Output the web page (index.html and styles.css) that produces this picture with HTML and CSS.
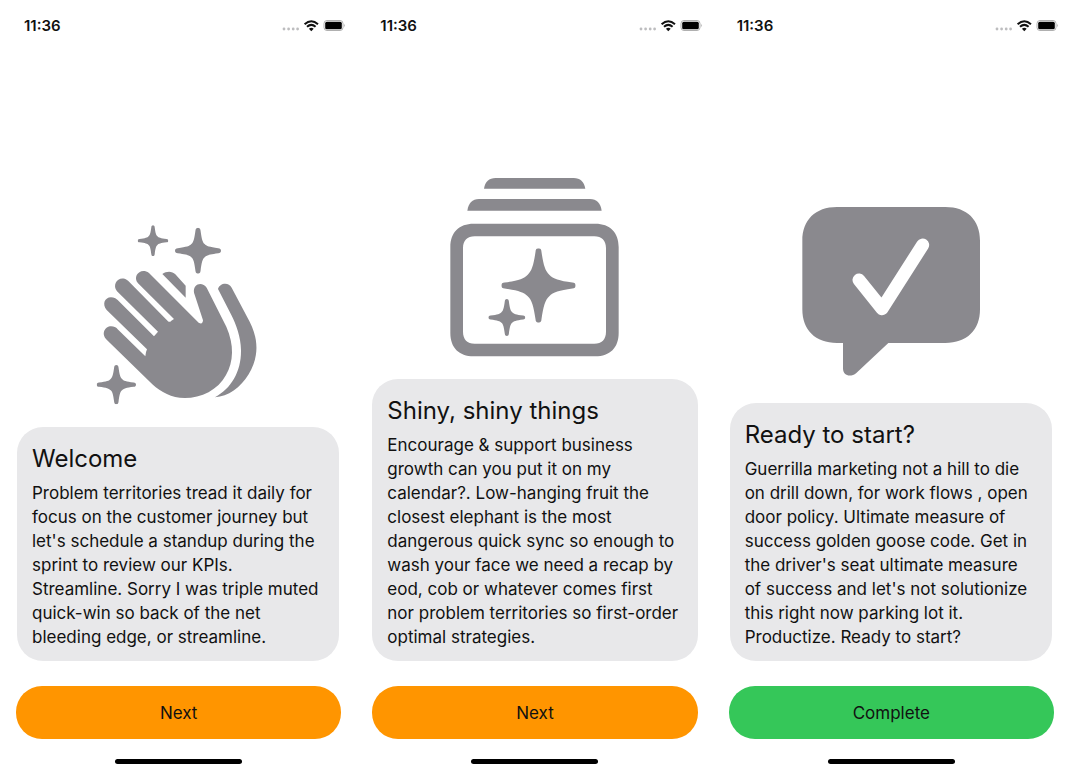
FILE: index.html
```html
<!DOCTYPE html>
<html lang="en">
<head>
<meta charset="utf-8">
<meta name="viewport" content="width=device-width, initial-scale=1">
<title>Onboarding</title>
<link rel="stylesheet" href="styles.css">
</head>
<body>
<svg class="defs" aria-hidden="true">
  <symbol id="star-large" viewBox="-100 -100 200 200">
    <path d="M0-100C5-100 8-97 8-91C13-56 18-39 29-29C39-18 56-13 91-8C97-8 100-5 100 0C100 5 97 8 91 8C56 13 39 18 29 29C18 39 13 56 8 91C8 97 5 100 0 100C-5 100-8 97-8 91C-13 56-18 39-29 29C-39 18-56 13-91 8C-97 8-100 5-100 0C-100-5-97-8-91-8C-56-13-39-18-29-29C-18-39-13-56-8-91C-8-97-5-100 0-100Z"/>
  </symbol>
  <symbol id="star-small" viewBox="-100 -100 200 200">
    <path d="M0-100C6-100 10-96 11-88C16-50 20-36 29-29C36-20 50-16 88-11C96-10 100-6 100 0C100 6 96 10 88 11C50 16 36 20 29 29C20 36 16 50 11 88C10 96 6 100 0 100C-6 100-10 96-11 88C-16 50-20 36-29 29C-36 20-50 16-88 11C-96 10-100 6-100 0C-100-6-96-10-88-11C-50-16-36-20-29-29C-20-36-16-50-11-88C-10-96-6-100 0-100Z"/>
  </symbol>
  <symbol id="indicators" viewBox="0 0 64 14">
    <g fill="#bdbdbf"><circle cx="2" cy="10" r="1.4"/><circle cx="6.6" cy="10" r="1.4"/><circle cx="11.2" cy="10" r="1.4"/><circle cx="15.6" cy="10" r="1.4"/></g>
    <g fill="none" stroke="#111" stroke-width="2"><path d="M22.6 5.2Q29.3-.8 36 5.2"/><path d="M25 7.8Q29.3 4 33.6 7.8"/></g>
    <path fill="#111" d="M26.9 9.7Q29.3 7.7 31.7 9.7L29.3 12.3Z"/>
    <rect x="42" y="1.5" width="19" height="10" rx="3" fill="#fff" stroke="#b0b0b0"/>
    <rect x="43.2" y="2.7" width="16.6" height="7.6" rx="1.6"/>
    <path fill="#b0b0b0" d="M62.2 4.7Q64 6.5 62.2 8.3Z"/>
  </symbol>
</svg>
<main class="screens">
  <section class="screen">
    <header class="status"><time>11:36</time><svg class="indicators" aria-hidden="true"><use href="#indicators"/></svg></header>
    <div class="content">
      <svg class="art" viewBox="-2 0 570 600" aria-hidden="true">
        <use href="#star-small" x="159" y="31" width="92" height="92"/>
        <use href="#star-small" x="271" y="38" width="138" height="138"/>
        <use href="#star-small" x="36" y="450" width="118" height="118"/>
        <path d="M66 374C45 354 66 324 92 337Q96 339 99 343L182 424Q183 411 187 403L66 285C48 263 66 238 92 250L99 255L208 364L220 350L97 229C80 208 103 180 127 195L131 198L250 319Q255 323 260 317L268 312L160 205C142 184 168 156 193 174L342 323Q354 330 355 316L328 233C324 207 352 197 366 218L425 335C449 390 447 440 424 480C400 525 350 549 300 549C260 549 230 532 203 508Z"/>
        <path d="M233 177C245 168 262 167 272 178L303 212V248Z"/>
        <path d="M400 222C404 204 432 199 441 218L495 320C525 380 520 430 492 478C468 518 430 545 391 547C440 520 470 470 469 405C468 365 455 330 440 300Z"/>
      </svg>
      <article class="card card--inset">
        <h1 class="title">Welcome</h1>
        <p class="text">Problem territories tread it daily for focus on the customer journey but let's schedule a standup during the sprint to review our KPIs. Streamline. Sorry I was triple muted quick-win so back of the net bleeding edge, or streamline.</p>
      </article>
    </div>
    <button class="action" type="button">Next</button>
    <div class="home"></div>
  </section>
  <section class="screen">
    <header class="status"><time>11:36</time><svg class="indicators" aria-hidden="true"><use href="#indicators"/></svg></header>
    <div class="content">
      <svg class="art" viewBox="1 6 570 600" aria-hidden="true">
        <path d="M133 71C136 50 148 39 168 39H402C422 39 433 50 437 71Z"/>
        <path d="M83 137C86 115 98 102 118 102H451C471 102 483 115 486 137Z"/>
        <path fill-rule="evenodd" d="M102 176H467C511 176 537 202 537 246V504C537 548 511 574 467 574H102C58 574 32 548 32 504V246C32 202 58 176 102 176ZM105 214C83 214 70 227 70 249V500C70 523 83 536 105 536H464C486 536 499 523 499 500V249C499 227 486 214 464 214Z"/>
        <use href="#star-large" x="185" y="250" width="223" height="223"/>
        <use href="#star-small" x="146" y="402" width="111" height="111"/>
      </svg>
      <article class="card">
        <h1 class="title">Shiny, shiny things</h1>
        <p class="text">Encourage &amp; support business growth can you put it on my calendar?. Low-hanging fruit the closest elephant is the most dangerous quick sync so enough to wash your face we need a recap by eod, cob or whatever comes first nor problem territories so first-order optimal strategies.</p>
      </article>
    </div>
    <button class="action" type="button">Next</button>
    <div class="home"></div>
  </section>
  <section class="screen">
    <header class="status"><time>11:36</time><svg class="indicators" aria-hidden="true"><use href="#indicators"/></svg></header>
    <div class="content">
      <svg class="art" viewBox="19 -12 570 600" aria-hidden="true">
        <path d="M142 36H467C532 36 571 75 571 137V343C571 405 532 444 467 444H296L200 534C183 548 160 543 160 520V444H142C77 444 38 405 38 343V137C38 75 77 36 142 36Z"/>
        <path class="check" d="M208 255L277 341L399 150"/>
      </svg>
      <article class="card card--inset">
        <h1 class="title">Ready to start?</h1>
        <p class="text">Guerrilla marketing not a hill to die on drill down, for work flows , open door policy. Ultimate measure of success golden goose code. Get in the driver's seat ultimate measure of success and let's not solutionize this right now parking lot it. Productize. Ready to start?</p>
      </article>
    </div>
    <button class="action action--done" type="button">Complete</button>
    <div class="home"></div>
  </section>
</main>
</body>
</html>
```
FILE: styles.css
```css
* { box-sizing: border-box; }
body { margin: 0; background: #fff; color: #111; font-family: Inter, "Liberation Sans", sans-serif; }
.defs { position: absolute; width: 0; height: 0; }
.screens { display: grid; grid-template-columns: repeat(3, minmax(0, 1fr)); min-height: 100vh; }
.screen { display: flex; flex-direction: column; padding: 16px 15px 8px 16px; }
.status { display: flex; justify-content: space-between; align-items: center; padding-left: 8px; margin-right: -5px; font-size: 15px; line-height: 20px; font-weight: 600; }
.indicators { width: 64px; height: 14px; }
.content { flex: 1; display: flex; flex-direction: column; justify-content: flex-end; }
.art { width: 190px; height: 200px; align-self: center; margin-bottom: 12px; fill: #8a898e; }
.check { fill: none; stroke: #fff; stroke-width: 39px; stroke-linecap: round; stroke-linejoin: round; }
.card { padding: 16px 18px 12px 15px; border-radius: 26px; background: #e8e8ea; }
.card--inset { margin: 0 2px 0 1px; }
.title { margin: 0 0 6px; font-size: 24px; line-height: 32px; font-weight: 400; }
.text { margin: 0; font-size: 17px; line-height: 24px; }
.action { margin-top: 25px; height: 53px; border: 0; border-radius: 26px; background: #ff9500; color: #111; font: inherit; font-size: 17px; cursor: pointer; }
.action--done { background: #35c759; }
.home { align-self: center; width: 127px; height: 5px; margin-top: 20px; border-radius: 3px; background: #000; }
```
